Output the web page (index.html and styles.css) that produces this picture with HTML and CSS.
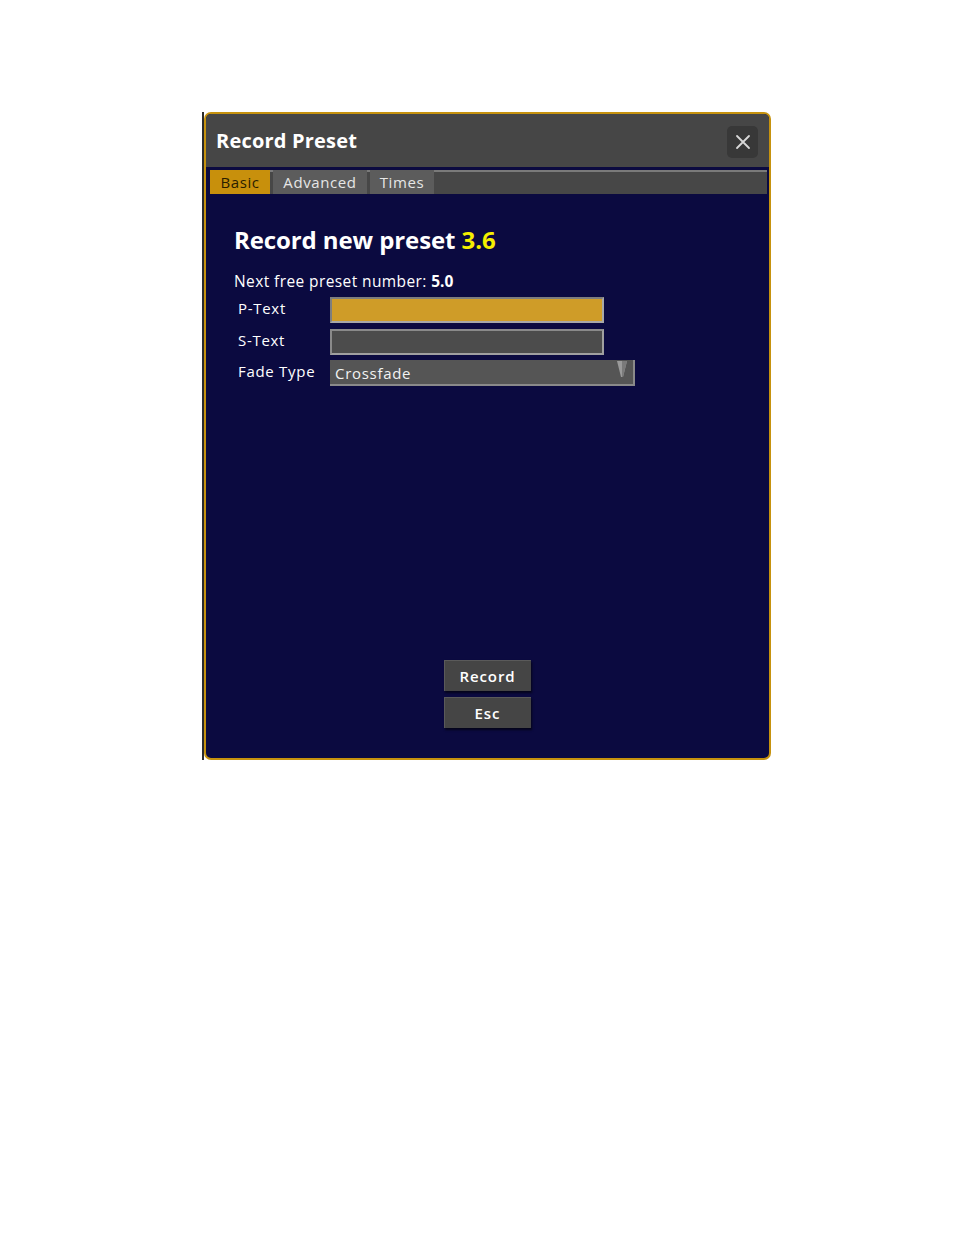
FILE: index.html
```html
<!DOCTYPE html>
<html>
<head>
<meta charset="utf-8">
<link rel="stylesheet" href="styles.css">
</head>
<body>
<div class="page">
  <div class="frame">
    <div class="dialog">
      <div class="titlebar">
        <span class="title">Record Preset</span>
        <button class="close" aria-label="Close">
          <svg width="16" height="16" viewBox="0 0 16 16"><path d="M2 2 L14 14 M14 2 L2 14" stroke="#d8d8d8" stroke-width="1.8" stroke-linecap="round"/></svg>
        </button>
      </div>
      <div class="tabs">
        <div class="tab active tab-basic">Basic</div>
        <div class="tab tab-adv">Advanced</div>
        <div class="tab tab-times">Times</div>
      </div>
      <div class="content">
        <h1 class="heading">Record new preset <span class="num">3.6</span></h1>
        <div class="next">Next free preset number: <b>5.0</b></div>
        <div class="form">
          <div class="row">
            <label class="lbl">P-Text</label>
            <div class="input input-active"></div>
          </div>
          <div class="row">
            <label class="lbl">S-Text</label>
            <div class="input"></div>
          </div>
          <div class="row">
            <label class="lbl">Fade Type</label>
            <div class="select">
              <span>Crossfade</span>
              <svg class="arrow" width="10" height="16" viewBox="0 0 10 16"><path d="M0 0 L10 0 L6 16 L4 16 Z" fill="#9a9a9a"/><path d="M5 0 L10 0 L6 16 L5 16 Z" fill="#7a7a7a"/></svg>
            </div>
          </div>
        </div>
        <div class="spacer"></div>
        <div class="buttons">
          <button class="btn">Record</button>
          <button class="btn">Esc</button>
        </div>
      </div>
    </div>
  </div>
</div>
</body>
</html>
```
FILE: styles.css
```css
html, body {
  margin: 0;
  padding: 0;
  background: #ffffff;
}
body {
  font-family: "Open Sans", "DejaVu Sans", sans-serif;
}
.page {
  padding: 112px 0 0 202px;
}
.frame {
  width: 569px;
  border-left: 2px solid #2b2b2b;
  box-sizing: border-box;
}
.dialog {
  width: 567px;
  height: 648px;
  box-sizing: border-box;
  border: 2px solid #c6920e;
  border-radius: 7px;
  background: #0b0a40;
  display: flex;
  flex-direction: column;
  overflow: hidden;
}
.titlebar {
  height: 53px;
  flex: none;
  background: #464646;
  display: flex;
  align-items: center;
  justify-content: space-between;
  padding: 0 11px 0 10px;
}
.title {
  color: #ffffff;
  font-weight: 700;
  font-size: 20px;
  letter-spacing: 0.2px;
  margin-top: 0;
}
.close {
  width: 31px;
  height: 32px;
  border: none;
  border-radius: 5px;
  background: #383838;
  display: flex;
  align-items: center;
  justify-content: center;
  padding: 0;
  margin-top: 2px;
}
.tabs {
  flex: none;
  margin: 3px 2px 0 4px;
  height: 24px;
  box-sizing: border-box;
  background: #474747;
  border-top: 2px solid #7a7a7a;
  display: flex;
  gap: 3px;
}
.tab {
  display: flex;
  align-items: center;
  justify-content: center;
  color: #e6e6e6;
  font-size: 15px;
  letter-spacing: 0.6px;
  background: #5c5c5c;
  margin-top: -2px;
  height: 24px;
  box-sizing: border-box;
  padding-top: 0;
}
.tab.active {
  background: #c8900c;
  color: #2a1e00;
}
.tab-basic { width: 60px; }
.tab-adv { width: 94px; }
.tab-times { width: 64px; }
.content {
  flex: 1;
  display: flex;
  flex-direction: column;
  padding: 28px 0 30px 28px;
}
.heading {
  margin: 0;
  color: #ffffff;
  font-size: 24px;
  font-weight: 700;
  line-height: 36px;
  letter-spacing: -0.1px;
}
.num {
  color: #f6f000;
}
.next {
  margin-top: 13px;
  color: #ffffff;
  font-size: 15.5px;
  letter-spacing: 0.4px;
  line-height: 20px;
}
.next b {
  font-weight: 700;
  letter-spacing: 0;
}
.form {
  display: flex;
  flex-direction: column;
  gap: 6px;
  margin-top: 6px;
  padding-left: 4px;
}
.row {
  display: flex;
  align-items: center;
  height: 26px;
}
.row:last-child {
  margin-top: -1px;
}
.lbl {
  width: 92px;
  color: #ffffff;
  font-size: 15px;
  letter-spacing: 0.7px;
  margin-top: -4px;
}
.input {
  width: 274px;
  height: 26px;
  box-sizing: border-box;
  background: #4c4c4c;
  border: 2px solid #8a8a8a;
  border-right-color: #a0a0a0;
  border-bottom-color: #a0a0a0;
}
.input-active {
  background: #cf9c28;
  border-color: #7e7e7e #a8a8a8 #a8a8a8 #7e7e7e;
}
.select {
  width: 305px;
  height: 26px;
  box-sizing: border-box;
  background: #555555;
  border-bottom: 2px solid #8a8a8a;
  border-right: 2px solid #8a8a8a;
  display: flex;
  align-items: center;
  justify-content: space-between;
  padding: 2px 6px 0 5px;
  color: #f2f2f2;
  font-size: 15px;
  letter-spacing: 0.7px;
}
.select .arrow {
  align-self: flex-start;
  margin-top: -1px;
}
.spacer {
  flex: 1;
}
.buttons {
  display: flex;
  flex-direction: column;
  align-items: center;
  gap: 6px;
  margin-left: -28px;
}
.btn {
  width: 87px;
  height: 31px;
  border: none;
  background: #454545;
  color: #ffffff;
  font-family: "Open Sans", "DejaVu Sans", sans-serif;
  font-size: 15px;
  font-weight: 600;
  letter-spacing: 0.9px;
  box-shadow: 1px 2px 2px rgba(0, 0, 0, 0.6), inset 1px 1px 0 #5a5a5a;
  padding: 0;
}
```
